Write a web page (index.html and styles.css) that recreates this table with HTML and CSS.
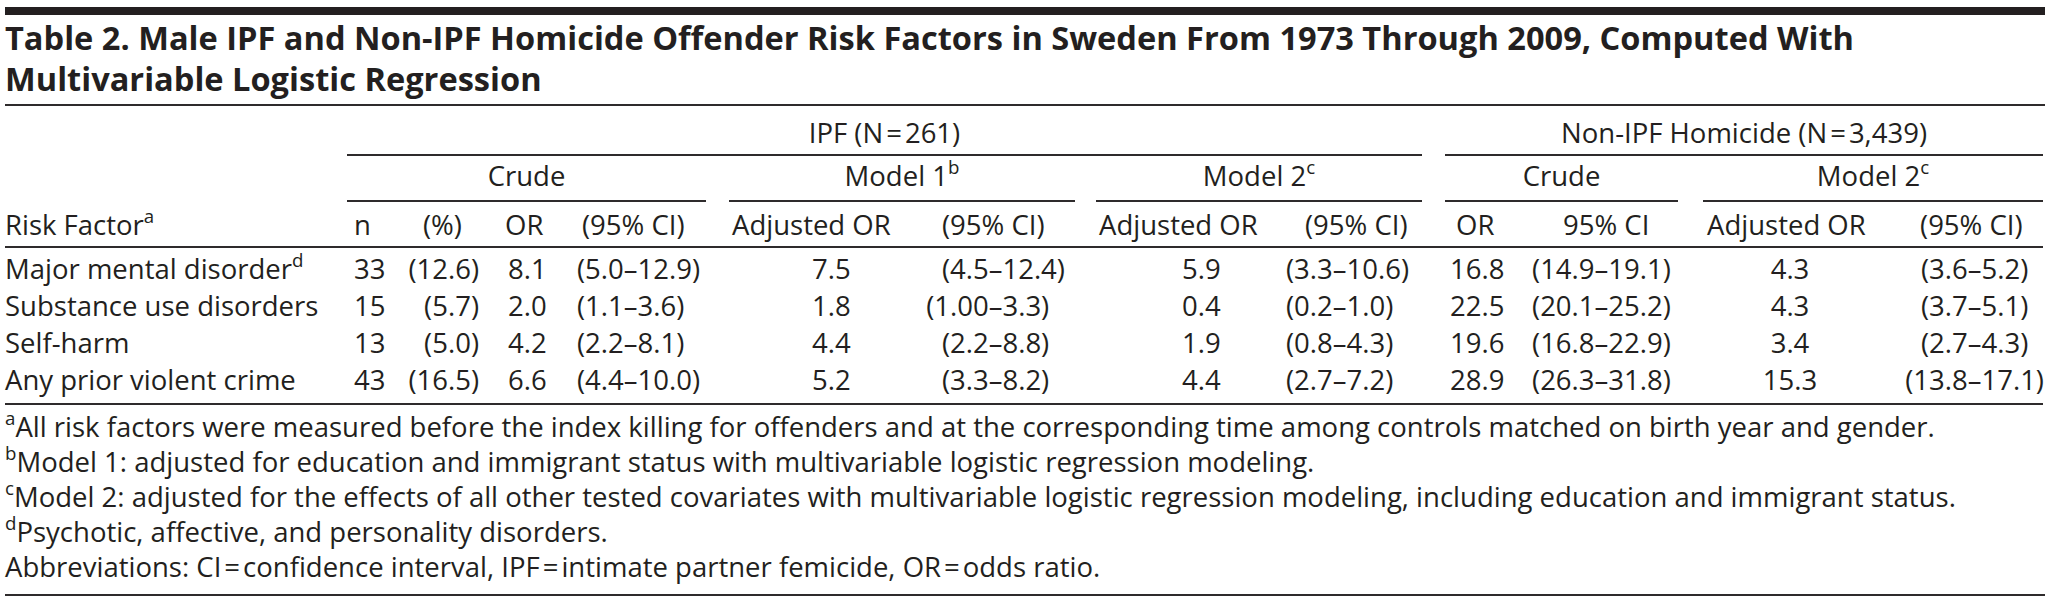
FILE: index.html
```html
<!DOCTYPE html>
<html lang="en">
<head>
<meta charset="utf-8">
<title>Table 2</title>
<link rel="stylesheet" href="styles.css">
</head>
<body>
<div class="page">
  <div class="topbar"></div>
  <h1 class="title">Table 2. Male IPF and Non-IPF Homicide Offender Risk Factors in Sweden From 1973 Through 2009, Computed With<br>Multivariable Logistic Regression</h1>
  <table class="tbl">
    <colgroup>
      <col class="w-risk"><col class="w-n"><col class="w-pct"><col class="w-or"><col class="w-ci">
      <col class="w-sp1">
      <col class="w-m1or"><col class="w-m1ci">
      <col class="w-sp2">
      <col class="w-m2or"><col class="w-m2ci">
      <col class="w-sp3">
      <col class="w-nor"><col class="w-nci">
      <col class="w-sp4">
      <col class="w-nm2or"><col class="w-nm2ci">
    </colgroup>
    <thead>
      <tr class="r1">
        <th></th>
        <th colspan="10" class="grp">IPF (N<span class="eq">=</span>261)</th>
        <th></th>
        <th colspan="5" class="grp">Non-IPF Homicide (N<span class="eq">=</span>3,439)</th>
      </tr>
      <tr class="r2">
        <th></th>
        <th colspan="4" class="grp">Crude</th>
        <th></th>
        <th colspan="2" class="grp">Model 1<sup>b</sup></th>
        <th></th>
        <th colspan="2" class="grp">Model 2<sup>c</sup></th>
        <th></th>
        <th colspan="2" class="grp">Crude</th>
        <th></th>
        <th colspan="2" class="grp">Model 2<sup>c</sup></th>
      </tr>
      <tr class="r3">
        <th>Risk Factor<sup>a</sup></th>
        <th>n</th>
        <th>(%)</th>
        <th>OR</th>
        <th>(95% CI)</th>
        <th></th>
        <th>Adjusted OR</th>
        <th>(95% CI)</th>
        <th></th>
        <th>Adjusted OR</th>
        <th>(95% CI)</th>
        <th></th>
        <th>OR</th>
        <th>95% CI</th>
        <th></th>
        <th>Adjusted OR</th>
        <th>(95% CI)</th>
      </tr>
    </thead>
    <tbody>
      <tr>
        <td>Major mental disorder<sup>d</sup></td>
        <td>33</td><td>(12.6)</td><td>8.1</td><td><span class="lo">(5.0</span>–12.9)</td>
        <td></td>
        <td>7.5</td><td><span class="lo wide">(4.5</span>–12.4)</td>
        <td></td>
        <td>5.9</td><td><span class="lo">(3.3</span>–10.6)</td>
        <td></td>
        <td>16.8</td><td><span class="lo">(14.9</span>–19.1)</td>
        <td></td>
        <td>4.3</td><td><span class="lo wide">(3.6</span>–5.2)</td>
      </tr>
      <tr>
        <td>Substance use disorders</td>
        <td>15</td><td>(5.7)</td><td>2.0</td><td><span class="lo">(1.1</span>–3.6)</td>
        <td></td>
        <td>1.8</td><td><span class="lo wide">(1.00</span>–3.3)</td>
        <td></td>
        <td>0.4</td><td><span class="lo">(0.2</span>–1.0)</td>
        <td></td>
        <td>22.5</td><td><span class="lo">(20.1</span>–25.2)</td>
        <td></td>
        <td>4.3</td><td><span class="lo wide">(3.7</span>–5.1)</td>
      </tr>
      <tr>
        <td>Self-harm</td>
        <td>13</td><td>(5.0)</td><td>4.2</td><td><span class="lo">(2.2</span>–8.1)</td>
        <td></td>
        <td>4.4</td><td><span class="lo wide">(2.2</span>–8.8)</td>
        <td></td>
        <td>1.9</td><td><span class="lo">(0.8</span>–4.3)</td>
        <td></td>
        <td>19.6</td><td><span class="lo">(16.8</span>–22.9)</td>
        <td></td>
        <td>3.4</td><td><span class="lo wide">(2.7</span>–4.3)</td>
      </tr>
      <tr>
        <td>Any prior violent crime</td>
        <td>43</td><td>(16.5)</td><td>6.6</td><td><span class="lo">(4.4</span>–10.0)</td>
        <td></td>
        <td>5.2</td><td><span class="lo wide">(3.3</span>–8.2)</td>
        <td></td>
        <td>4.4</td><td><span class="lo">(2.7</span>–7.2)</td>
        <td></td>
        <td>28.9</td><td><span class="lo">(26.3</span>–31.8)</td>
        <td></td>
        <td>15.3</td><td><span class="lo wide">(13.8</span>–17.1)</td>
      </tr>
    </tbody>
  </table>
  <div class="notes">
    <p class="note"><sup>a</sup>All risk factors were measured before the index killing for offenders and at the corresponding time among controls matched on birth year and gender.</p>
    <p class="note"><sup>b</sup>Model 1: adjusted for education and immigrant status with multivariable logistic regression modeling.</p>
    <p class="note"><sup>c</sup>Model 2: adjusted for the effects of all other tested covariates with multivariable logistic regression modeling, including education and immigrant status.</p>
    <p class="note"><sup>d</sup>Psychotic, affective, and personality disorders.</p>
    <p class="note">Abbreviations: CI<span class="eq">=</span>confidence interval, IPF<span class="eq">=</span>intimate partner femicide, OR<span class="eq">=</span>odds ratio.</p>
  </div>
</div>
</body>
</html>
```

FILE: styles.css
```css
* { box-sizing: border-box; }

html, body {
  margin: 0;
  padding: 0;
  background: #ffffff;
}

body {
  font-family: "Open Sans", "Noto Sans", "Liberation Sans", sans-serif;
  color: #231f20;
  font-size: 27.5px;
}

.page {
  width: 2051px;
  padding: 7px 6px 0 5px;
}

.topbar {
  height: 8px;
  background: #231f20;
}

.title {
  margin: 2px 0 0;
  padding: 0 0 5px;
  font-size: 32.6px;
  line-height: 41px;
  font-weight: 700;
  border-bottom: 2px solid #2e2b2c;
  white-space: nowrap;
}

sup {
  font-size: 0.68em;
  line-height: 0;
  vertical-align: 0.62em;
}

.eq { margin: 0 3px; }

.tbl {
  width: 2038px;
  table-layout: fixed;
  border-collapse: separate;
  border-spacing: 0;
  line-height: 37px;
}

.tbl th, .tbl td {
  padding: 0;
  font-weight: 400;
  text-align: left;
  white-space: nowrap;
  vertical-align: top;
}

.w-risk { width: 342px; }
.w-n { width: 53px; }
.w-pct { width: 85px; }
.w-or { width: 80px; }
.w-ci { width: 141px; }
.w-sp1 { width: 23px; }
.w-m1or { width: 176px; }
.w-m1ci { width: 170px; }
.w-sp2 { width: 21px; }
.w-m2or { width: 174px; }
.w-m2ci { width: 152px; }
.w-sp3 { width: 23px; }
.w-nor { width: 70px; }
.w-nci { width: 163px; }
.w-sp4 { width: 25px; }
.w-nm2or { width: 177px; }
.w-nm2ci { width: 163px; }

.tbl th.grp {
  text-align: center;
  border-bottom: 2px solid #2e2b2c;
}

.r1 th { padding: 8px 0 3px; }
.r2 th { padding: 1px 0 6px; }
.r3 th { padding: 4px 0 3px; border-bottom: 2px solid #2e2b2c; }

.r3 th:nth-child(2) { padding-left: 7px; }
.r3 th:nth-child(3) { padding-left: 23px; }
.r3 th:nth-child(4) { padding-left: 20px; }
.r3 th:nth-child(5) { padding-left: 17px; }
.r3 th:nth-child(7) { padding-left: 3px; }
.r3 th:nth-child(8) { padding-left: 37px; }
.r3 th:nth-child(10) { padding-left: 3px; }
.r3 th:nth-child(11) { padding-left: 35px; }
.r3 th:nth-child(13) { padding-left: 11px; }
.r3 th:nth-child(14) { padding-left: 48px; }
.r3 th:nth-child(16) { padding-left: 4px; }
.r3 th:nth-child(17) { padding-left: 40px; }

.tbl tbody tr:first-child td { padding-top: 2px; }
.tbl tbody tr:last-child td { padding-bottom: 5px; border-bottom: 2px solid #2e2b2c; }

.tbl td:nth-child(2) { padding-left: 7px; }
.tbl td:nth-child(3) { text-align: right; padding-right: 6px; }
.tbl td:nth-child(4) { padding-left: 23px; }
.tbl td:nth-child(5) { padding-left: 12px; }
.tbl td:nth-child(7) { padding-left: 83px; }
.tbl td:nth-child(8) { padding-left: 21px; }
.tbl td:nth-child(10) { padding-left: 86px; }
.tbl td:nth-child(11) { padding-left: 16px; }
.tbl td:nth-child(13) { padding-left: 5px; }
.tbl td:nth-child(14) { padding-left: 17px; }
.tbl td:nth-child(16) { text-align: center; padding-right: 3px; }
.tbl td:nth-child(17) { padding-left: 25px; }

.lo {
  display: inline-block;
  text-align: right;
}
.lo.wide { width: 2.28em; }

.notes {
  padding: 4px 0 10px;
  border-bottom: 2px solid #2e2b2c;
}

.note {
  margin: 0;
  line-height: 35px;
  white-space: nowrap;
}
```
